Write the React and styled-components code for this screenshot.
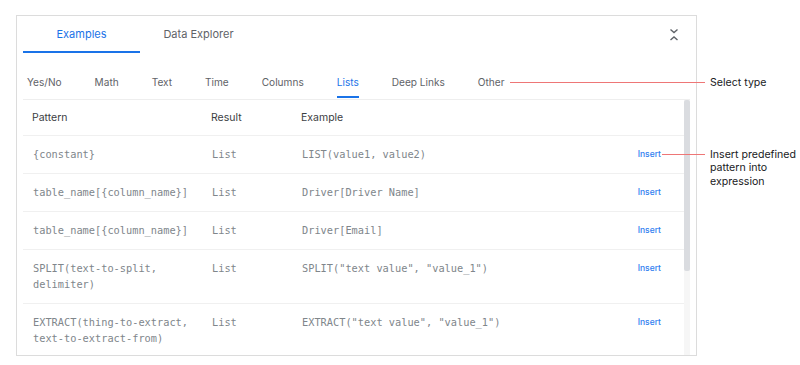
import React from "react";
import styled, { createGlobalStyle } from "styled-components";

const GlobalStyle = createGlobalStyle`
  body {
    margin: 0;
    background: #fff;
    font-family: Inter, "Noto Sans", sans-serif;
  }
`;

// Page: panel on the left, notes on the right
const Page = styled.div`
  display: flex;
  align-items: flex-start;
  padding: 15px 0 0 16px;
  width: 800px;
  height: 365px;
  box-sizing: border-box;
`;

const Panel = styled.div`
  width: 681px;
  height: 341px;
  box-sizing: border-box;
  border: 1px solid #dcdcdc;
  padding: 0 6px;
  display: flex;
  flex-direction: column;
  overflow: hidden;
`;

const TopTabs = styled.div`
  display: flex;
  align-items: stretch;
  height: 37px;
`;

const TopTab = styled.div`
  width: 117px;
  box-sizing: border-box;
  display: flex;
  align-items: center;
  justify-content: center;
  font-size: 11px;
  color: ${(p) => (p.active ? "#1a73e8" : "#5f6368")};
  border-bottom: 2px solid ${(p) => (p.active ? "#1a73e8" : "transparent")};
`;

const Collapse = styled.div`
  margin-left: auto;
  margin-right: 11px;
  display: flex;
  align-items: center;
`;

const TypeTabs = styled.div`
  display: flex;
  gap: 33px;
  margin-top: 14px;
  padding-left: 4px;
  border-bottom: 1px solid #eeeeee;
`;

const TypeTab = styled.div`
  height: 31px;
  box-sizing: border-box;
  display: flex;
  align-items: center;
  font-size: 10.1px;
  color: ${(p) => (p.active ? "#1a73e8" : "#5f6368")};
  border-bottom: 2px solid ${(p) => (p.active ? "#1a73e8" : "transparent")};
  margin-bottom: 1px;
`;

const Body = styled.div`
  flex: 1;
  min-height: 0;
  display: flex;
`;

const TableWrap = styled.div`
  flex: 1;
  overflow: hidden;
`;

const Row = styled.div`
  display: grid;
  grid-template-columns: 179px 90px 1fr auto;
  align-items: start;
  padding: 10px 23px 11px 10px;
  border-bottom: 1px solid #f0f0f0;
`;

const HeadRow = styled(Row)`
  height: 36px;
  box-sizing: border-box;
  align-items: center;
  padding: 0 23px 0 9px;
`;

const HeadCell = styled.div`
  font-size: 10.5px;
  color: #3c4043;
`;

const Cell = styled.div`
  font-family: "DejaVu Sans Mono", "Liberation Mono", monospace;
  font-size: 10.3px;
  line-height: 16px;
  color: #80868b;
  white-space: pre-line;
`;

const Insert = styled.div`
  font-size: 8.5px;
  font-weight: 500;
  line-height: 16px;
  color: #2f7ef0;
`;

const ScrollTrack = styled.div`
  width: 6px;
  background: #f6f6f6;
  display: flex;
  flex-direction: column;
`;

const ScrollThumb = styled.div`
  height: 171px;
  background: #dadce0;
  border-radius: 2px;
`;

// Notes column with leader lines
const Notes = styled.div`
  display: flex;
  flex-direction: column;
  margin-left: 13px;
  padding-top: 61px;
`;

const Note = styled.div`
  position: relative;
  font-size: 10.6px;
  line-height: 13.5px;
  color: #202124;
  margin-top: ${(p) => p.gap || 0}px;

  &::before {
    content: "";
    position: absolute;
    right: calc(100% + 5px);
    top: 6px;
    width: ${(p) => p.lead}px;
    height: 1px;
    background: #ee7676;
  }
`;

const types = ["Yes/No", "Math", "Text", "Time", "Columns", "Lists", "Deep Links", "Other"];

const rows = [
  { pattern: "{constant}", example: "LIST(value1, value2)" },
  { pattern: "table_name[{column_name}]", example: "Driver[Driver Name]" },
  { pattern: "table_name[{column_name}]", example: "Driver[Email]" },
  { pattern: "SPLIT(text-to-split,\ndelimiter)", example: 'SPLIT("text value", "value_1")' },
  { pattern: "EXTRACT(thing-to-extract,\ntext-to-extract-from)", example: 'EXTRACT("text value", "value_1")' },
];

const App = () => {
  return (
    <>
      <GlobalStyle />
      <Page>
        <Panel>
          <TopTabs>
            <TopTab active>Examples</TopTab>
            <TopTab>Data Explorer</TopTab>
            <Collapse>
              <svg width="10" height="14" viewBox="0 0 10 14" fill="none" stroke="#5f6368" strokeWidth="1.4">
                <path d="M1.5 1.5 L5 4.5 L8.5 1.5" />
                <path d="M1.5 12 L5 9 L8.5 12" />
              </svg>
            </Collapse>
          </TopTabs>
          <TypeTabs>
            {types.map((t) => (
              <TypeTab key={t} active={t === "Lists"}>
                {t}
              </TypeTab>
            ))}
          </TypeTabs>
          <Body>
            <TableWrap>
              <HeadRow>
                <HeadCell>Pattern</HeadCell>
                <HeadCell>Result</HeadCell>
                <HeadCell>Example</HeadCell>
                <HeadCell />
              </HeadRow>
              {rows.map((r, i) => (
                <Row key={i}>
                  <Cell>{r.pattern}</Cell>
                  <Cell>List</Cell>
                  <Cell>{r.example}</Cell>
                  <Insert>Insert</Insert>
                </Row>
              ))}
            </TableWrap>
            <ScrollTrack>
              <ScrollThumb />
            </ScrollTrack>
          </Body>
        </Panel>
        <Notes>
          <Note lead={195}>Select type</Note>
          <Note lead={43} gap={58}>
            Insert predefined
            <br />
            pattern into
            <br />
            expression
          </Note>
        </Notes>
      </Page>
    </>
  );
};

export default App;
